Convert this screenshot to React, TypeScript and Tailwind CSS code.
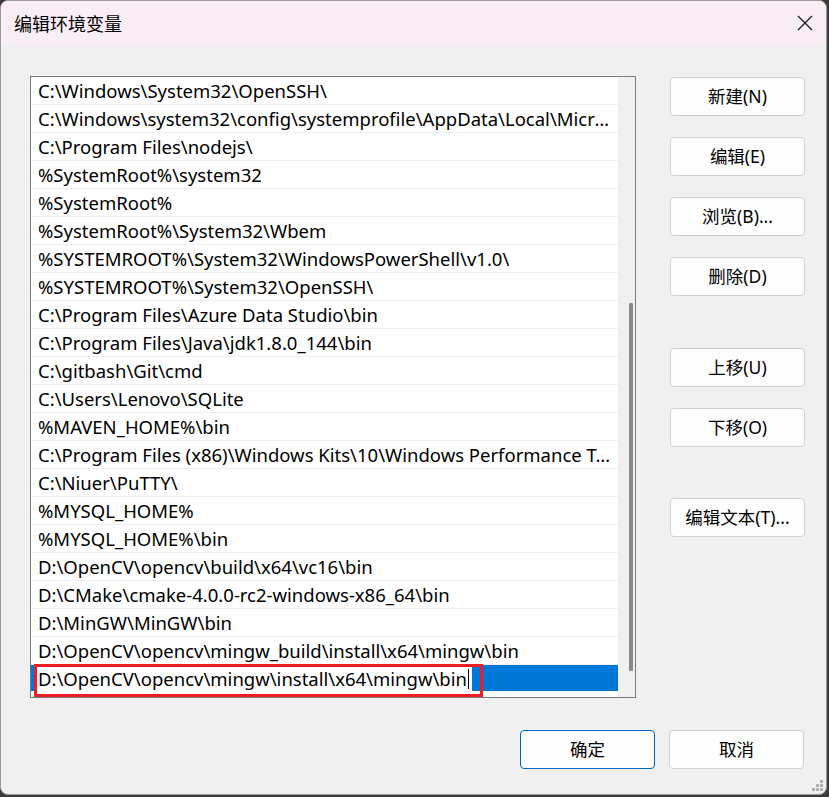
const paths = [
  "C:\\Windows\\System32\\OpenSSH\\",
  "C:\\Windows\\system32\\config\\systemprofile\\AppData\\Local\\Microsoft\\WindowsApps",
  "C:\\Program Files\\nodejs\\",
  "%SystemRoot%\\system32",
  "%SystemRoot%",
  "%SystemRoot%\\System32\\Wbem",
  "%SYSTEMROOT%\\System32\\WindowsPowerShell\\v1.0\\",
  "%SYSTEMROOT%\\System32\\OpenSSH\\",
  "C:\\Program Files\\Azure Data Studio\\bin",
  "C:\\Program Files\\Java\\jdk1.8.0_144\\bin",
  "C:\\gitbash\\Git\\cmd",
  "C:\\Users\\Lenovo\\SQLite",
  "%MAVEN_HOME%\\bin",
  "C:\\Program Files (x86)\\Windows Kits\\10\\Windows Performance Toolkit\\",
  "C:\\Niuer\\PuTTY\\",
  "%MYSQL_HOME%",
  "%MYSQL_HOME%\\bin",
  "D:\\OpenCV\\opencv\\build\\x64\\vc16\\bin",
  "D:\\CMake\\cmake-4.0.0-rc2-windows-x86_64\\bin",
  "D:\\MinGW\\MinGW\\bin",
  "D:\\OpenCV\\opencv\\mingw_build\\install\\x64\\mingw\\bin",
];

const editing = "D:\\OpenCV\\opencv\\mingw\\install\\x64\\mingw\\bin";

function Btn({ label, primary }: { label: string; primary?: boolean }) {
  return (
    <button
      type="button"
      className={`h-[39px] w-[135px] rounded-[4px] border bg-[#fdfdfd] text-[17.5px] text-black ${
        primary ? "border-[#0067c0]" : "border-[#d0d0d0]"
      }`}
    >
      {label}
    </button>
  );
}

export default function App() {
  return (
    <div
      className="h-[797px] w-[829px] overflow-hidden bg-[#3c3c3c]"
      style={{ fontFamily: '"Noto Sans", "Noto Sans CJK SC", sans-serif' }}
    >
      <div className="flex h-[795px] w-[827px] flex-col overflow-hidden rounded-[8px] border border-[#9a9a9a] bg-[#f0f0f0]">
        {/* title bar */}
        <div className="flex h-[44px] shrink-0 items-center justify-between bg-[#f9eef6] pl-[13px] pr-[10px]">
          <span className="text-[18px] text-black" style={{ fontFamily: '"Noto Sans CJK SC", sans-serif' }}>
            编辑环境变量
          </span>
          <svg width="20" height="20" viewBox="0 0 20 20" className="mr-[1px]">
            <path d="M3 3 L17 17 M17 3 L3 17" stroke="#1a1a1a" strokeWidth="1.3" fill="none" />
          </svg>
        </div>

        <div className="relative flex flex-1 flex-col">
          <div className="flex gap-[34px] pl-[29px] pt-[31px]">
            {/* list */}
            <div className="flex h-[622px] w-[606px] border border-[#7a7a7a] bg-white">
              <div className="flex w-[587px] flex-col">
                {paths.map((p) => (
                  <div
                    key={p}
                    className="flex h-[28px] shrink-0 items-center border-b border-[#f0f0f0] pl-[7px] pr-[1px] text-[18.5px] leading-[26px] text-black"
                  >
                    <span className="truncate">{p}</span>
                  </div>
                ))}
                <div className="relative h-[26px] shrink-0 bg-[#0078d7]">
                  <div className="absolute left-[4px] top-[1px] flex h-[26px] w-[437px] items-center border-l border-[#555] bg-white pl-[2px] text-[18.5px] leading-[26px] text-black">
                    <span className="whitespace-nowrap">{editing}</span>
                    <span className="ml-[1px] inline-block h-[20px] w-px shrink-0 bg-black" />
                  </div>
                  <div className="absolute left-[3px] top-[-1px] h-[33px] w-[449px] border-[3px] border-[#ed1c24]" />
                </div>
              </div>
              <div className="relative flex-1 bg-[#f0f0f0]">
                <div className="absolute left-[11px] top-[226px] h-[368px] w-[4px] rounded-[1px] bg-[#8a8a8a]" />
              </div>
            </div>

            {/* side buttons */}
            <div className="flex flex-col pt-[1px]">
              <div className="flex flex-col gap-[21px]">
                <Btn label="新建(N)" />
                <Btn label="编辑(E)" />
                <Btn label="浏览(B)..." />
                <Btn label="删除(D)" />
              </div>
              <div className="mt-[52px] flex flex-col gap-[21px]">
                <Btn label="上移(U)" />
                <Btn label="下移(O)" />
              </div>
              <div className="mt-[51px]">
                <Btn label="编辑文本(T)..." />
              </div>
            </div>
          </div>

          {/* bottom buttons */}
          <div className="mt-[32px] flex justify-end gap-[14px] pr-[22px]">
            <Btn label="确定" primary />
            <Btn label="取消" />
          </div>

          <svg width="12" height="12" viewBox="0 0 12 12" className="absolute bottom-[2px] right-[2px]">
            <rect x="8" y="0" width="3" height="3" fill="#b0b0b0" />
            <rect x="4" y="4" width="3" height="3" fill="#b0b0b0" />
            <rect x="8" y="4" width="3" height="3" fill="#b0b0b0" />
            <rect x="0" y="8" width="3" height="3" fill="#b0b0b0" />
            <rect x="4" y="8" width="3" height="3" fill="#b0b0b0" />
            <rect x="8" y="8" width="3" height="3" fill="#b0b0b0" />
          </svg>
        </div>
      </div>
    </div>
  );
}
